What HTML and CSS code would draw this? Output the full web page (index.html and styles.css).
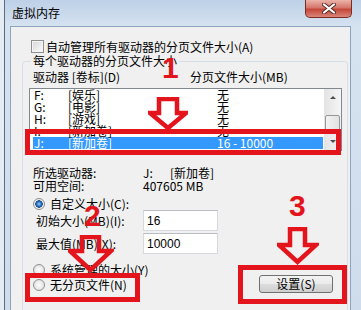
FILE: index.html
```html
<!DOCTYPE html>
<html lang="zh-CN">
<head>
    <meta charset="UTF-8">
    <title>虚拟内存</title>
    <link rel="stylesheet" href="styles.css">
</head>
<body>
    <div class="window">
        <!-- Title bar -->
        <div class="titlebar">
            <span class="title">虚拟内存</span>
            <div class="close">
                <svg width="14" height="11" viewBox="0 0 14 11">
                    <path d="M2 1.5 L12 9.5 M12 1.5 L2 9.5" stroke="#5a2a24" stroke-width="4" stroke-linecap="round"/>
                    <path d="M2 1.5 L12 9.5 M12 1.5 L2 9.5" stroke="#fff" stroke-width="2.2" stroke-linecap="round"/>
                </svg>
            </div>
        </div>

        <div class="panel">
            <div class="check-row">
                <span class="checkbox"></span>
                <span>自动管理所有驱动器的分页文件大小(A)</span>
            </div>

            <div class="group">
                <div class="group-title">每个驱动器的分页文件大小</div>
                <div class="list-head">
                    <span class="head-drive">驱动器 [卷标](D)</span>
                    <span>分页文件大小(MB)</span>
                </div>

                <div class="listbox">
                    <div class="rows">
                        <div class="row"><span class="c1">F:</span><span class="c2">[娱乐]</span><span class="c3">无</span></div>
                        <div class="row"><span class="c1">G:</span><span class="c2">[电影]</span><span class="c3">无</span></div>
                        <div class="row"><span class="c1">H:</span><span class="c2">[游戏]</span><span class="c3">无</span></div>
                        <div class="row"><span class="c1">I:</span><span class="c2">[新加卷]</span><span class="c3">无</span></div>
                        <div class="row selected"><span class="c1">J:</span><span class="c2">[新加卷]</span><span class="c3">16 - 10000</span></div>
                    </div>
                    <div class="scrollbar">
                        <div class="sb-btn"><span class="tri-up"></span></div>
                        <div class="sb-thumb"></div>
                        <div class="sb-track"></div>
                        <div class="sb-btn"><span class="tri-down"></span></div>
                    </div>
                </div>

                <div class="info">
                    <div class="info-row"><span class="info-label">所选驱动器:</span><span class="info-drive">J:</span><span>[新加卷]</span></div>
                    <div class="info-row"><span class="info-label">可用空间:</span><span>407605 MB</span></div>
                </div>

                <div class="radio-row first">
                    <span class="radio on"></span>
                    <span>自定义大小(C):</span>
                </div>
                <div class="field-row">
                    <label class="field-label" for="initial">初始大小(MB)(I):</label>
                    <input class="field-input" type="text" id="initial" value="16">
                </div>
                <div class="field-row second">
                    <label class="field-label" for="maximum">最大值(MB)(X):</label>
                    <input class="field-input" type="text" id="maximum" value="10000">
                </div>

                <div class="bottom">
                    <div class="bottom-radios">
                        <div class="radio-row">
                            <span class="radio"></span>
                            <span>系统管理的大小(Y)</span>
                        </div>
                        <div class="radio-row last">
                            <span class="radio"></span>
                            <span>无分页文件(N)</span>
                        </div>
                    </div>
                    <button class="btn" type="button">设置(S)</button>
                </div>
            </div>
        </div>

        <!-- Red annotations drawn over the dialog -->
        <div class="mark mark-1">1</div>
        <div class="mark mark-2">2</div>
        <div class="mark mark-3">3</div>

        <svg class="arrow arrow-1" width="40" height="34" viewBox="0 0 40 34">
            <polygon points="11,2 29,2 29,16 38,16 20,31 2,16 11,16"/>
        </svg>
        <svg class="arrow arrow-2" width="46" height="39" viewBox="0 0 46 39">
            <polygon points="14,2 31,2 31,16 43,16 22.5,35 2,16 14,16"/>
        </svg>
        <svg class="arrow arrow-3" width="42" height="39" viewBox="0 0 42 39">
            <polygon points="13,2 28,2 28,18 39,18 20.5,35 2,18 13,18"/>
        </svg>

        <div class="box box-1"></div>
        <div class="box box-2"></div>
        <div class="box box-3"></div>
    </div>
</body>
</html>
```

FILE: styles.css
```css
body {
    margin: 0;
    padding: 0;
    background-color: #e6ecf3;
    font-family: "Noto Sans CJK SC", sans-serif;
    font-size: 12px;
    color: #000;
}

.window {
    position: relative;
    margin-left: 4px;
    width: 356px;
    height: 310px;
    border-left: 1px solid #5b6b80;
    background: linear-gradient(#bdd0e7, #d5e2f0 26px, #cfdcec);
    overflow: hidden;
}

/* title bar */
.titlebar {
    height: 26px;
    display: flex;
    justify-content: space-between;
    align-items: flex-start;
}

.title {
    padding: 6px 0 0 7px;
    line-height: 14px;
}

.close {
    width: 47px;
    height: 18px;
    margin-right: 9px;
    box-sizing: border-box;
    border: 1px solid #7a2c22;
    border-top: none;
    border-radius: 0 0 5px 5px;
    background: linear-gradient(#ebb3a9, #d5776b 45%, #c4473a 55%, #d9857a);
    display: flex;
    align-items: center;
    justify-content: center;
}

/* dialog body */
.panel {
    margin-left: 5px;
    width: 341px;
    height: 284px;
    box-sizing: border-box;
    border: 1px solid #8ea3bc;
    border-bottom: none;
    background-color: #f0f0f0;
    padding: 0 2px 0 11px;
}

.check-row {
    display: flex;
    align-items: center;
    gap: 2px;
    height: 13px;
    line-height: 13px;
    margin: 13px 0 0 9px;
}

.checkbox {
    width: 13px;
    height: 13px;
    box-sizing: border-box;
    border: 1px solid #8e8f8f;
    background: linear-gradient(135deg, #d6d6d6, #fbfbfb);
    box-shadow: inset 0 0 0 1px #f4f4f4;
}

.group {
    margin-top: 8px;
    height: 260px;
    border: 1px solid #d5dfe5;
    border-radius: 3px;
    padding: 0 5px 0 6px;
}

.group-title {
    display: table;
    margin: -7px 0 0 2px;
    padding: 0 2px;
    line-height: 12px;
    background-color: #f0f0f0;
}

.list-head {
    display: flex;
    margin-top: 4px;
    padding-left: 4px;
    line-height: 12px;
}

.head-drive {
    width: 157px;
}

/* drive list */
.listbox {
    display: flex;
    margin-top: 5px;
    height: 63px;
    box-sizing: border-box;
    border: 1px solid #828790;
    background-color: #fff;
}

.rows {
    flex: 1;
    padding-left: 3px;
}

.row {
    display: flex;
    height: 12px;
    line-height: 12px;
    padding-left: 1px;
    margin-right: 1px;
}

.row.selected {
    background-color: #3399ff;
    color: #fff;
}

.c1 {
    width: 34px;
}

.c2 {
    width: 149px;
}

.c3 {
    white-space: pre;
}

.scrollbar {
    width: 17px;
    display: flex;
    flex-direction: column;
    background: linear-gradient(to right, #e3e3e3, #f5f5f5);
}

.sb-btn {
    height: 17px;
    display: flex;
    align-items: center;
    justify-content: center;
}

.tri-up {
    border-left: 3px solid transparent;
    border-right: 3px solid transparent;
    border-bottom: 3px solid #4d4d4d;
}

.tri-down {
    border-left: 3px solid transparent;
    border-right: 3px solid transparent;
    border-top: 3px solid #4d4d4d;
}

.sb-thumb {
    margin: 9px 1px 0 1px;
    height: 16px;
    box-sizing: border-box;
    border: 1px solid #979797;
    border-radius: 2px;
    background: linear-gradient(to right, #f3f3f3, #e2e2e2);
}

.sb-track {
    flex: 1;
}

/* selected drive info */
.info {
    margin-top: 15px;
    padding-left: 4px;
}

.info-row {
    display: flex;
    line-height: 13px;
}

.info-label {
    width: 110px;
}

.info-drive {
    width: 27px;
}

/* radios and fields */
.radio-row {
    display: flex;
    align-items: center;
    gap: 5px;
    height: 12px;
    line-height: 12px;
    padding-left: 4px;
}

.radio-row.first {
    margin-top: 6px;
}

.radio-row.last {
    margin-top: 3px;
}

.radio {
    width: 12px;
    height: 12px;
    box-sizing: border-box;
    border-radius: 50%;
    border: 1px solid #8e8f8f;
    background: radial-gradient(circle, #fdfdfd 0, #e4e4e4 5px);
}

.radio.on {
    background: radial-gradient(circle, #9fd2ff 0, #2f7bcb 2px, #174c86 3.5px, #f6f6f6 4px, #dedede 6px);
}

.field-row {
    display: flex;
    align-items: center;
    height: 21px;
}

.field-row.second {
    margin-top: 2px;
}

.field-label {
    width: 107px;
    padding-left: 7px;
}

.field-input {
    width: 75px;
    height: 21px;
    box-sizing: border-box;
    margin: 0;
    border: 1px solid #d6d9de;
    border-top-color: #b9bcc2;
    padding: 0 0 0 3px;
    font-family: "Liberation Sans", sans-serif;
    font-size: 12px;
    color: #000;
    background-color: #fff;
}

.bottom {
    display: flex;
    justify-content: space-between;
    margin-top: 10px;
}

.btn {
    width: 74px;
    height: 18px;
    margin: 11px 9px 0 0;
    padding: 0;
    border: 1px solid #707070;
    border-radius: 3px;
    background: linear-gradient(#f3f3f3, #ebebeb 50%, #dddddd 50%, #cfcfcf);
    font-family: "Noto Sans CJK SC", sans-serif;
    font-size: 12px;
    line-height: 16px;
    color: #000;
}

/* red annotations */
.mark {
    position: absolute;
    font-family: "Liberation Sans", sans-serif;
    font-weight: bold;
    font-size: 30px;
    line-height: 30px;
    color: #e4141c;
}

.mark-1 {
    left: 157px;
    top: 53px;
}

.mark-2 {
    left: 79px;
    top: 201px;
}

.mark-3 {
    left: 284px;
    top: 191px;
}

.arrow {
    position: absolute;
}

.arrow polygon {
    fill: none;
    stroke: #e4141c;
    stroke-width: 4.5;
}

.arrow-1 {
    left: 143px;
    top: 97px;
}

.arrow-2 {
    left: 63px;
    top: 235px;
}

.arrow-3 {
    left: 272px;
    top: 227px;
}

.box {
    position: absolute;
    box-sizing: border-box;
    border: 5px solid #e4141c;
}

.box-1 {
    left: 20px;
    top: 129px;
    width: 316px;
    height: 26px;
}

.box-2 {
    left: 20px;
    top: 273px;
    width: 115px;
    height: 29px;
}

.box-3 {
    left: 233px;
    top: 265px;
    width: 109px;
    height: 39px;
}
```
